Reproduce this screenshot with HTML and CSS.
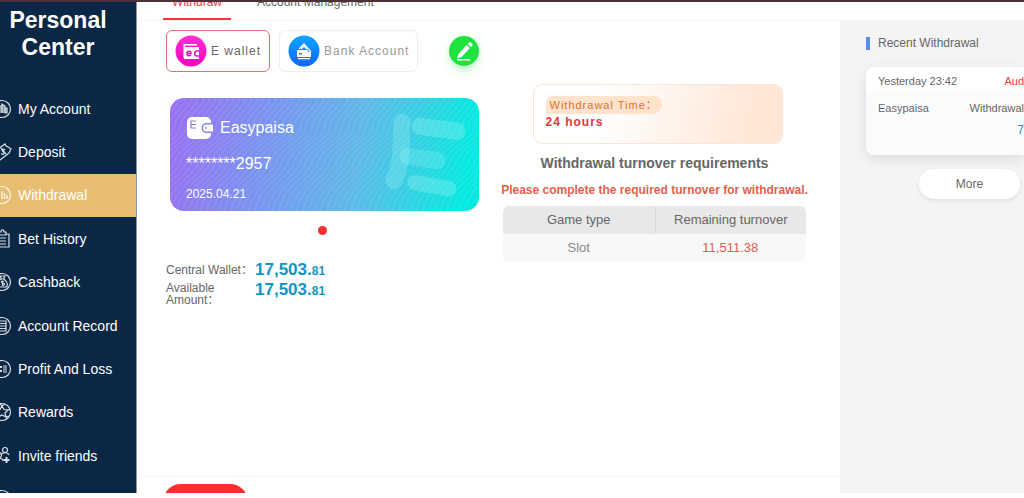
FILE: index.html
```html
<!DOCTYPE html>
<html lang="en">
<head>
    <meta charset="UTF-8">
    <meta name="viewport" content="width=device-width, initial-scale=1.0">
    <title>Personal Center</title>
    <link rel="stylesheet" href="styles.css">
</head>
<body>

<div class="app">
    <nav class="sidebar">
        <h1>Personal Center</h1>
        <ul class="menu">
            <li><a href="#">
                <svg class="menu-icon" viewBox="0 0 20 20"><circle cx="10" cy="10" r="8.5"/><path d="M7 14V7h3v7M10 14V5l3 2v7M13 14V9h2v5z" fill="currentColor" fill-opacity=".6"/></svg>
                My Account</a></li>
            <li><a href="#">
                <svg class="menu-icon" viewBox="0 0 20 20"><path d="M3 9L13 2l1 2 2 1 3 2-2 4-9 7-1-2-3-1z"/><path d="M13 8c-2-2-4 0-2 1.500s1 4-2 2M9 6l5 6"/></svg>
                Deposit</a></li>
            <li><a href="#" class="active">
                <svg class="menu-icon" viewBox="0 0 20 20"><circle cx="10" cy="10" r="8.500"/><path d="M7 9v5M10 6v8M12.500 8v6M15 10v4" stroke-width="1.400"/></svg>
                Withdrawal</a></li>
            <li><a href="#">
                <svg class="menu-icon" viewBox="0 0 20 20"><path d="M7 5H4v13h13V5h-3M7 6V3h2c0-3 3-3 3 0h2v3zM7 9h7M7 12h7M7 15h7"/></svg>
                Bet History</a></li>
            <li><a href="#">
                <svg class="menu-icon" viewBox="0 0 20 20"><circle cx="10" cy="10" r="8.500"/><path d="M8 4h5l-1.500 3h-2zM9 7c-5 4-4 8-2 8h7c2 0 2-5-2-8M12 9.500c-3-1-3 1.500-1 1.500s2 3-1 2M10.500 8.500v5.500"/></svg>
                Cashback</a></li>
            <li><a href="#">
                <svg class="menu-icon" viewBox="0 0 20 20"><circle cx="10" cy="10" r="8.500"/><path d="M6 5h8v10H6zM8 7.500h6M8 10h6M8 12.500h6"/></svg>
                Account Record</a></li>
            <li><a href="#">
                <svg class="menu-icon" viewBox="0 0 20 20"><circle cx="10" cy="10" r="8.500"/><path d="M8 8h2M8 12h2" stroke-width="2"/><path d="M11 7h4M11 9h4M11 11h4M11 13h4"/></svg>
                Profit And Loss</a></li>
            <li><a href="#">
                <svg class="menu-icon" viewBox="0 0 20 20"><circle cx="10" cy="10" r="8.500"/><path d="M10 4l2 3.500 4 .5-3 3 1 4-4-2-4 2 1-4-3-3 4-.5zM10 4L8 2M10 4l3-2M16 8l2-1M14 15l1 2M14 15l3-1"/></svg>
                Rewards</a></li>
            <li><a href="#">
                <svg class="menu-icon" viewBox="0 0 20 20"><circle cx="13" cy="4" r="2.500"/><path d="M9 9c1-3 7-3 8 0"/><circle cx="7" cy="9" r="2.500"/><path d="M2 16c1-5 9-5 9-1"/><path d="M14.500 11v6M11.500 14h6" stroke-width="2"/></svg>
                Invite friends</a></li>
            <li><a href="#" aria-label="Support">
                <svg class="menu-icon" viewBox="0 0 20 20"><circle cx="10" cy="10" r="8.500"/><path d="M5 10c0-6 10-6 10 0"/></svg></a></li>
        </ul>
    </nav>

    <main class="content">
        <div class="tabs">
            <a href="#" class="tab selected">Withdraw</a>
            <a href="#" class="tab">Account Management</a>
        </div>

        <div class="columns">
            <div class="work">
                <div class="panels">
                    <section class="wallet">
                        <div class="methods">
                            <button class="method chosen">
                                <svg class="method-icon" viewBox="0 0 32 32">
                                    <defs><linearGradient id="pink" x2="0" y2="1"><stop offset="0" stop-color="#ff2fd0"/><stop offset="1" stop-color="#ff00c0"/></linearGradient></defs>
                                    <circle cx="16" cy="16" r="15.500" fill="url(#pink)"/>
                                    <path d="M8.500 9H22v1.500H10V12h14v12H10c-1 0-1.500-1-1.500-2z" fill="#fff"/>
                                    <path d="M12 18.500h4c0-3-4-3-4 0s3 2.500 4 1.500M24 16h-2c-3 0-3 5 0 5h2" fill="none" stroke="#ff0fc4" stroke-width="1.600"/>
                                </svg>
                                E wallet
                            </button>
                            <button class="method">
                                <svg class="method-icon" viewBox="0 0 32 32">
                                    <defs><linearGradient id="blue" x2="0" y2="1"><stop offset="0" stop-color="#12a5ff"/><stop offset="1" stop-color="#0468ff"/></linearGradient></defs>
                                    <circle cx="16" cy="16" r="15.500" fill="url(#blue)"/>
                                    <path d="M11 14l5-5 7 8M13 14l3-3 3 3" fill="none" stroke="#fff" stroke-width="1.200"/>
                                    <path d="M9 15h10c1 0 1 2 2 2h2v5H9zM10 23h12v1.200H10z" fill="#fff"/>
                                    <path d="M11 18h3v1.500h-3z" fill="#0b84ff"/>
                                </svg>
                                Bank Account
                            </button>
                            <button class="edit" aria-label="Edit">
                                <svg viewBox="0 0 30 30"><path d="M20 6.500c1-1.200 4.500 1.500 3.500 3L22 11l-3.500-3zM17.500 9l3.500 3-8.500 9-4.500 1.500 1.500-4.500zM8 23h13v1.500H8z" fill="#fff"/></svg>
                            </button>
                        </div>

                        <article class="bank-card">
                            <svg class="card-art" viewBox="0 0 309 112" preserveAspectRatio="none">
                                <defs>
                                    <path id="w1" d="M30 -10C44 6 18 12 16 28S-8 46-14 64-46 84-50 125"/>
                                    <g id="w2"><use href="#w1"/><use href="#w1" x="6"/></g>
                                    <g id="w4"><use href="#w2"/><use href="#w2" x="12"/></g>
                                    <g id="w8"><use href="#w4"/><use href="#w4" x="24"/></g>
                                    <g id="w16"><use href="#w8"/><use href="#w8" x="48"/></g>
                                    <g id="w32"><use href="#w16"/><use href="#w16" x="96"/></g>
                                </defs>
                                <g fill="none" stroke="#fff" stroke-opacity=".13">
                                    <use href="#w32" x="-36"/><use href="#w32" x="156"/>
                                </g>
                                <g fill="none" stroke="#a0f4f0" stroke-linecap="round" stroke-width="17">
                                    <path d="M232 24c-2 24 2 36-8 58" stroke-opacity=".28"/>
                                    <path d="M287 33l-37-5" stroke-opacity=".32"/>
                                    <path d="M267 62l-29-4" stroke-opacity=".25"/>
                                    <path d="M279 90l-34-6" stroke-width="15" stroke-opacity=".32"/>
                                </g>
                            </svg>
                            <div class="card-name">
                                <svg class="card-logo" viewBox="0 0 28 24">
                                    <rect x="1" y="1" width="24" height="22" rx="5" fill="#fff"/>
                                    <path d="M10 5H5v7h5M5 8.500h5" fill="none" stroke="#9278e8" stroke-width="1.200"/>
                                    <path d="M28 7h-8c-6 0-6 10 0 10h8z" fill="#8785ec"/>
                                    <path d="M27 8.500h-7c-4 0-4 7 0 7h7z" fill="#fff"/><circle cx="20" cy="12" r="1" fill="#8785ec"/>
                                </svg>
                                Easypaisa
                            </div>
                            <div class="card-number">********2957</div>
                            <div class="card-date">2025.04.21</div>
                        </article>
                        <span class="dot"></span>

                        <dl class="balances">
                            <dt>Central Wallet：</dt>
                            <dd>17,503.<small>81</small></dd>
                            <dt>Available Amount：</dt>
                            <dd>17,503.<small>81</small></dd>
                        </dl>
                    </section>

                    <section class="turnover">
                        <div class="time-box">
                            <span class="time-label">Withdrawal Time：</span>
                            <strong>24 hours</strong>
                        </div>
                        <h2>Withdrawal turnover requirements</h2>
                        <p class="notice">Please complete the required turnover for withdrawal.</p>
                        <table class="games">
                            <thead>
                                <tr><th>Game type</th><th>Remaining turnover</th></tr>
                            </thead>
                            <tbody>
                                <tr><td>Slot</td><td class="left-amount">11,511.38</td></tr>
                            </tbody>
                        </table>
                    </section>
                </div>
                <div class="actions">
                    <button class="submit" aria-label="Submit"></button>
                </div>
            </div>

            <aside class="recent">
                <h3>Recent Withdrawal</h3>
                <div class="record">
                    <div class="record-row"><span>Yesterday 23:42</span><span class="status">Aud</span></div>
                    <div class="record-row detail"><span>Easypaisa</span><span>Withdrawal</span></div>
                    <div class="record-amount">7</div>
                </div>
                <button class="more">More</button>
            </aside>
        </div>
    </main>
</div>

</body>
</html>
```

FILE: styles.css
```css
* {
    box-sizing: border-box;
}
body {
    margin: 0;
    padding-bottom: 5px;
    height: 100vh;
    overflow: hidden;
    background: #fff;
    font-family: "Liberation Sans", Arial, "Noto Sans CJK SC", sans-serif;
    color: #666;
}
button {
    font-family: inherit;
    color: inherit;
    padding: 0;
    cursor: pointer;
}
a {
    text-decoration: none;
    color: inherit;
}
.app {
    display: flex;
    height: 100%;
    overflow: hidden;
    border-top: 2px solid #4d3238;
}

/* sidebar */
.sidebar {
    flex: 0 0 137px;
    background: #0a2746;
    border-right: 1px solid #8794a5;
    color: #fff;
    overflow: hidden;
}
.sidebar h1 {
    margin: 5px 20px 26px 0;
    font-size: 23px;
    line-height: 27px;
    text-align: center;
}
.menu {
    list-style: none;
    margin: 0;
    padding: 0;
    height: 434px;
    display: grid;
    grid-auto-rows: 1fr;
}
.menu a {
    display: flex;
    align-items: center;
    gap: 6px;
    height: 100%;
    font-size: 14px;
    white-space: nowrap;
}
.menu a.active {
    background: #e7bd71;
}
.menu-icon {
    flex: none;
    width: 20px;
    height: 20px;
    margin-left: -8px;
    fill: none;
    stroke: currentColor;
    stroke-width: 1.2;
    opacity: 0.85;
}

/* content */
.content {
    flex: 1;
    min-width: 0;
    display: flex;
    flex-direction: column;
}
.tabs {
    flex: none;
    display: flex;
    align-items: flex-end;
    height: 19px;
    padding-left: 26px;
    border-bottom: 1px solid #f5f5f5;
    overflow: hidden;
}
.tab {
    padding: 0 9px 9px;
    font-size: 12px;
    line-height: 14px;
    border-bottom: 2px solid transparent;
}
.tab + .tab {
    margin-left: 17px;
}
.tab.selected {
    color: #ef3b3b;
    border-color: #ef3b3b;
}
.columns {
    flex: 1;
    min-height: 0;
    display: flex;
}
.work {
    flex: 1;
    display: flex;
    flex-direction: column;
    min-width: 0;
}
.panels {
    flex: 1;
    display: flex;
    gap: 20px;
    padding-left: 29px;
}
.wallet {
    flex: 0 0 313px;
    padding-top: 9px;
}
.methods {
    display: flex;
    align-items: center;
    gap: 9px;
}
.method {
    display: flex;
    align-items: center;
    gap: 4px;
    height: 42px;
    padding: 0 8px;
    background: #fff;
    border: 1px solid #eee;
    border-radius: 6px;
    font-size: 12px;
    letter-spacing: 1px;
    color: #999;
    white-space: nowrap;
}
.method.chosen {
    border-color: #e07070;
    color: #666;
}
.method-icon {
    width: 32px;
    height: 32px;
}
.edit {
    width: 30px;
    height: 30px;
    margin-left: auto;
    border: 0;
    border-radius: 50%;
    background: #1fe23f;
    box-shadow: 0 4px 10px rgba(31, 226, 63, 0.3);
}
.edit svg {
    display: block;
}
.bank-card {
    position: relative;
    height: 113px;
    margin: 26px 0 0 4px;
    padding: 18px 16px;
    border-radius: 14px;
    background: linear-gradient(100deg, #9b6ff2 0%, #7b93f0 30%, #60b8e8 60%, #05eae0 95%);
    color: #fff;
    overflow: hidden;
}
.card-art {
    position: absolute;
    inset: 0;
    width: 100%;
    height: 100%;
}
.card-name, .card-number, .card-date {
    position: relative;
}
.card-name {
    display: flex;
    align-items: center;
    gap: 6px;
    font-size: 16px;
}
.card-logo {
    width: 28px;
    height: 24px;
}
.card-number {
    margin-top: 14px;
    font-size: 16px;
    line-height: 20px;
}
.card-date {
    margin-top: 13px;
    font-size: 12px;
    line-height: 14px;
}
.dot {
    display: block;
    width: 9px;
    height: 9px;
    margin: 15px auto 0;
    border-radius: 50%;
    background: #f52f2f;
}
.balances {
    display: grid;
    grid-template-columns: 80px auto;
    column-gap: 9px;
    margin: 25px 0 0;
}
.balances dt {
    padding-top: 4px;
    font-size: 12px;
    line-height: 12px;
    white-space: nowrap;
}
.balances dt:last-of-type {
    padding-top: 2px;
    white-space: normal;
}
.balances dd {
    margin: 0;
    font-size: 17px;
    line-height: 20px;
    font-weight: bold;
    color: #0f95c4;
}
.balances small {
    font-size: 12px;
    line-height: 12px;
}

/* turnover */
.turnover {
    flex: 0 0 311px;
    display: flex;
    flex-direction: column;
    align-items: center;
    padding-top: 63px;
}
.time-box {
    display: flex;
    flex-direction: column;
    align-items: flex-start;
    width: 250px;
    height: 60px;
    margin-left: 6px;
    padding: 11px 12px;
    border: 1px solid #fae6d8;
    border-radius: 9px;
    background: linear-gradient(100deg, #fff 25%, #ffe6d5 90%);
    font-size: 12px;
    line-height: 17px;
    letter-spacing: 1px;
}
.time-label {
    padding: 0 4px;
    border-radius: 7px 7px 9px 3px;
    background: #ffe3cc;
    color: #e8702a;
    font-size: 11px;
    line-height: 18px;
    white-space: nowrap;
}
.time-box strong {
    color: #e33535;
}
.turnover h2 {
    margin: 10px 0 9px;
    font-size: 14px;
    line-height: 18px;
    white-space: nowrap;
}
.notice {
    margin: 0 0 7px;
    font-size: 12px;
    line-height: 18px;
    font-weight: bold;
    color: #e0614c;
    white-space: nowrap;
}
.games {
    width: 303px;
    border-spacing: 0;
    border-radius: 6px;
    overflow: hidden;
    font-size: 13px;
    line-height: 28px;
    text-align: center;
}
.games th, .games td {
    width: 50%;
    padding: 0;
    font-weight: normal;
}
.games th {
    background: #e8e8e8;
}
.games th + th {
    border-left: 1px solid #dcdcdc;
}
.games td {
    background: #f8f8f8;
    color: #888;
}
.games .left-amount {
    color: #e0614c;
}
.actions {
    flex: none;
    height: 17px;
    margin-left: 4px;
    padding: 7px 0 0 22px;
    border-top: 1px solid #f5f5f5;
    overflow: hidden;
}
.submit {
    width: 85px;
    height: 36px;
    border: 0;
    border-radius: 18px;
    background: #fb2e2e;
}

/* recent withdrawals */
.recent {
    flex: 0 0 184px;
    padding: 16px 0 0 26px;
    background: #f4f4f4;
    overflow: hidden;
}
.recent h3 {
    margin: 0 0 17px;
    padding-left: 8px;
    border-left: 4px solid #5b8ce8;
    font-size: 12px;
    line-height: 13px;
    font-weight: normal;
}
.record {
    height: 88px;
    padding: 5px 0 5px 12px;
    border-radius: 8px 0 0 8px;
    background: linear-gradient(#fff 24px, #fbfbfb 24px);
    box-shadow: 0 4px 14px rgba(0, 0, 0, 0.1);
    font-size: 11px;
    line-height: 18px;
}
.record-row {
    display: flex;
    justify-content: space-between;
}
.record-row.detail {
    margin-top: 9px;
}
.status {
    color: #ef3b3b;
}
.record-amount {
    margin-top: 4px;
    font-size: 12px;
    text-align: right;
    color: #2196cf;
}
.more {
    display: block;
    width: 101px;
    height: 30px;
    margin: 14px 0 0 53px;
    border: 0;
    border-radius: 15px;
    background: #fff;
    box-shadow: 0 2px 5px rgba(0, 0, 0, 0.08);
    font-size: 12px;
}
```
